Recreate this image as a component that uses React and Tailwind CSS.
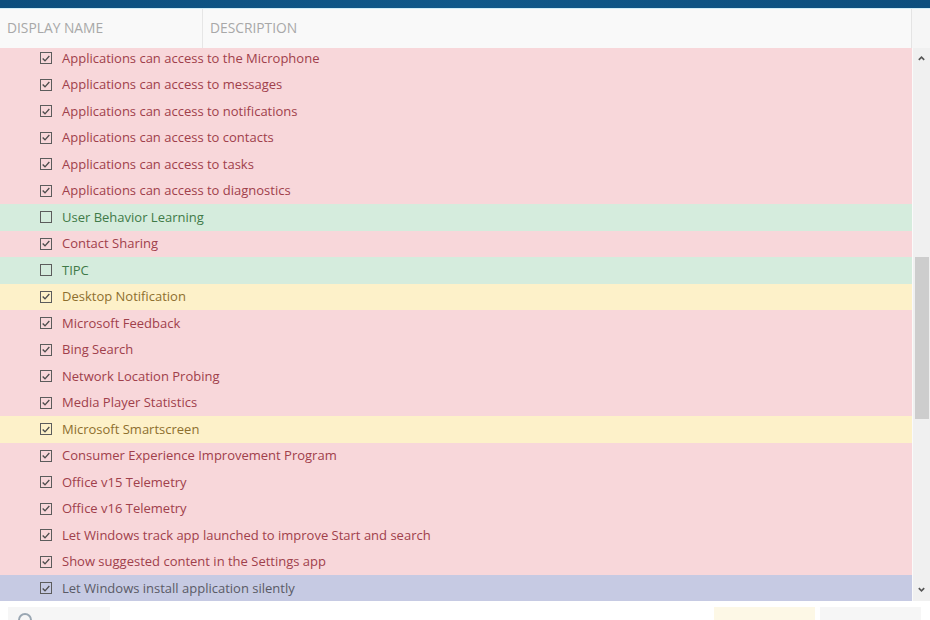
import React from 'react'

const rows = [
  ['Applications can access to the Microphone', 'red', true],
  ['Applications can access to messages', 'red', true],
  ['Applications can access to notifications', 'red', true],
  ['Applications can access to contacts', 'red', true],
  ['Applications can access to tasks', 'red', true],
  ['Applications can access to diagnostics', 'red', true],
  ['User Behavior Learning', 'green', false],
  ['Contact Sharing', 'red', true],
  ['TIPC', 'green', false],
  ['Desktop Notification', 'yellow', true],
  ['Microsoft Feedback', 'red', true],
  ['Bing Search', 'red', true],
  ['Network Location Probing', 'red', true],
  ['Media Player Statistics', 'red', true],
  ['Microsoft Smartscreen', 'yellow', true],
  ['Consumer Experience Improvement Program', 'red', true],
  ['Office v15 Telemetry', 'red', true],
  ['Office v16 Telemetry', 'red', true],
  ['Let Windows track app launched to improve Start and search', 'red', true],
  ['Show suggested content in the Settings app', 'red', true],
  ['Let Windows install application silently', 'purple', true],
]

const tones = {
  red: 'bg-[#f8d7da] text-[#a0404b]',
  green: 'bg-[#d5ecdd] text-[#3f7a48]',
  yellow: 'bg-[#fdf1c9] text-[#8d6f2e]',
  purple: 'bg-[#c6cae3] text-[#5a5a66]',
}

function Checkbox({ checked }) {
  return (
    <span className="w-[12px] h-[12px] border border-[#5c5c5c] flex items-center justify-center shrink-0">
      {checked && (
        <svg viewBox="0 0 12 12" className="w-[11px] h-[11px]" fill="none" stroke="#4d4d4d" strokeWidth="1.6">
          <path d="M2 6 L4.8 8.8 L10 3" />
        </svg>
      )}
    </span>
  )
}

export default function App() {
  return (
    <div className="w-[930px] h-[620px] overflow-hidden flex flex-col bg-white" style={{ fontFamily: '"Open Sans", "Noto Sans", sans-serif' }}>
      {/* barre du haut */}
      <div className="h-[9px] bg-gradient-to-r from-[#0c4f7e] via-[#10598a] to-[#0c4f7e] border-b border-[#cfeef7] shrink-0" />

      {/* entêtes */}
      <div className="h-[39px] flex bg-[#f9f9f9] shrink-0 text-[13.8px] text-[#a8a8a8] relative z-10">
        <div className="w-[203px] pl-[7px] flex items-center border-r border-[#e6e6e6]">DISPLAY NAME</div>
        <div className="flex-1 pl-[7px] flex items-center">DESCRIPTION</div>
        <div className="w-[19px] border-l border-[#e4e4e4] bg-[#f6f6f6]" />
      </div>

      {/* liste, défilée de quelques pixels */}
      <div className="flex shrink-0 h-[553px] overflow-hidden">
        <div className="flex-1 flex flex-col -mt-[3px]">
          {rows.map(([label, tone, checked]) => (
            <div key={label} className={`h-[26.5px] shrink-0 flex items-center pl-[40px] gap-[10px] text-[13px] ${tones[tone]}`}>
              <Checkbox checked={checked} />
              <span className="leading-none">{label}</span>
            </div>
          ))}
        </div>
        <div className="w-[18px] bg-[#f0f0f0] border-l border-[#fafafa] flex flex-col items-center">
          <svg viewBox="0 0 10 10" className="w-[9px] h-[9px] mt-[6px]" fill="none" stroke="#555" strokeWidth="1.8">
            <path d="M2 6.5 L5 3.5 L8 6.5" />
          </svg>
          <div className="h-[194px]" />
          <div className="w-[14px] h-[162px] bg-[#cdcdcd]" />
          <div className="flex-1" />
          <svg viewBox="0 0 10 10" className="w-[9px] h-[9px] mb-[7px]" fill="none" stroke="#555" strokeWidth="1.8">
            <path d="M2 3.5 L5 6.5 L8 3.5" />
          </svg>
        </div>
      </div>

      {/* pied */}
      <div className="flex-1 flex items-end pt-[6px] px-[8px]">
        <div className="w-[102px] h-full bg-[#f6f6f6] flex items-start pl-[10px] pt-[6px]">
          <span className="w-[14px] h-[14px] rounded-full border-2 border-[#9aa7b3]" />
        </div>
        <div className="flex-1" />
        <div className="w-[101px] h-full bg-[#fdf8e6] mr-[5px]" />
        <div className="w-[101px] h-full bg-[#f6f6f6] mr-[1px]" />
      </div>
    </div>
  )
}
